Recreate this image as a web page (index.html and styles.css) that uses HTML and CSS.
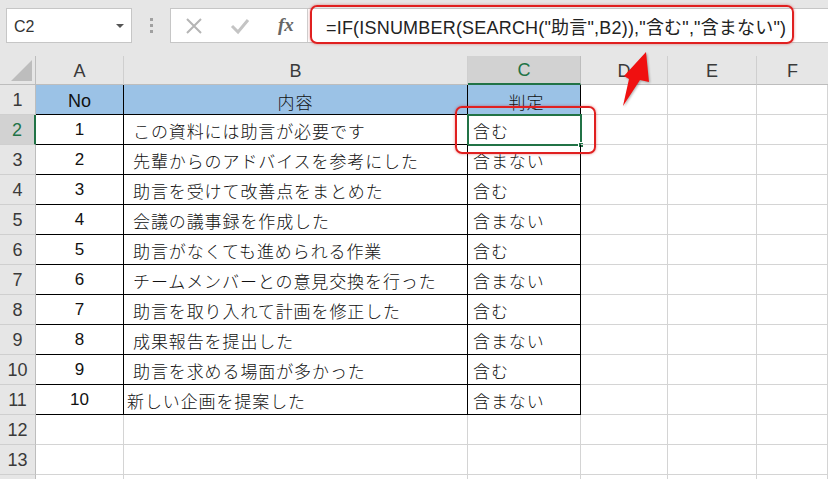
FILE: index.html
```html
<!DOCTYPE html>
<html lang="ja">
<head>
<meta charset="utf-8">
<link rel="stylesheet" href="styles.css">
</head>
<body>
<div class="app">
  <div class="topbar">
    <div class="namebox"><span class="name">C2</span><span class="caret"></span></div>
    <div class="dots"><i></i><i></i><i></i></div>
    <div class="fbar">
      <div class="ficons">
        <svg class="ic" width="20" height="20" viewBox="0 0 20 20"><path d="M3 3 L17 17 M17 3 L3 17" stroke="#b5b5b5" stroke-width="2" fill="none"/></svg>
        <svg class="ic" width="22" height="20" viewBox="0 0 22 20"><path d="M3 10 L9 16 L19 4" stroke="#c4c4c4" stroke-width="3" fill="none"/></svg>
        <span class="fx">fx</span>
      </div>
      <div class="formula">=IF(ISNUMBER(SEARCH("助言",B2)),"含む","含まない")</div>
    </div>
  </div>
  <div class="sheet">
    <div class="corner"><span class="tri"></span></div>
    <div class="ch">A</div><div class="ch">B</div><div class="ch sel">C</div><div class="ch">D</div><div class="ch">E</div><div class="ch last">F</div>

    <div class="rh">1</div><div class="c hd tb">No</div><div class="c hd tb">内容</div><div class="c hd tb">判定</div><div class="c"></div><div class="c"></div><div class="c"></div>
    <div class="rh rsel">2</div><div class="c tb ctr">1</div><div class="c tb">この資料には助言が必要です</div><div class="c tb active">含む<span class="handle"></span></div><div class="c"></div><div class="c"></div><div class="c"></div>
    <div class="rh">3</div><div class="c tb ctr">2</div><div class="c tb">先輩からのアドバイスを参考にした</div><div class="c tb">含まない</div><div class="c"></div><div class="c"></div><div class="c"></div>
    <div class="rh">4</div><div class="c tb ctr">3</div><div class="c tb">助言を受けて改善点をまとめた</div><div class="c tb">含む</div><div class="c"></div><div class="c"></div><div class="c"></div>
    <div class="rh">5</div><div class="c tb ctr">4</div><div class="c tb">会議の議事録を作成した</div><div class="c tb">含まない</div><div class="c"></div><div class="c"></div><div class="c"></div>
    <div class="rh">6</div><div class="c tb ctr">5</div><div class="c tb">助言がなくても進められる作業</div><div class="c tb">含む</div><div class="c"></div><div class="c"></div><div class="c"></div>
    <div class="rh">7</div><div class="c tb ctr">6</div><div class="c tb">チームメンバーとの意見交換を行った</div><div class="c tb">含まない</div><div class="c"></div><div class="c"></div><div class="c"></div>
    <div class="rh">8</div><div class="c tb ctr">7</div><div class="c tb">助言を取り入れて計画を修正した</div><div class="c tb">含む</div><div class="c"></div><div class="c"></div><div class="c"></div>
    <div class="rh">9</div><div class="c tb ctr">8</div><div class="c tb">成果報告を提出した</div><div class="c tb">含まない</div><div class="c"></div><div class="c"></div><div class="c"></div>
    <div class="rh">10</div><div class="c tb ctr">9</div><div class="c tb">助言を求める場面が多かった</div><div class="c tb">含む</div><div class="c"></div><div class="c"></div><div class="c"></div>
    <div class="rh">11</div><div class="c tb ctr">10</div><div class="c tb tight">新しい企画を提案した</div><div class="c tb">含まない</div><div class="c"></div><div class="c"></div><div class="c"></div>
    <div class="rh">12</div><div class="c"></div><div class="c"></div><div class="c"></div><div class="c"></div><div class="c"></div><div class="c"></div>
    <div class="rh">13</div><div class="c"></div><div class="c"></div><div class="c"></div><div class="c"></div><div class="c"></div><div class="c"></div>
    <div class="rh"></div><div class="c"></div><div class="c"></div><div class="c"></div><div class="c"></div><div class="c"></div><div class="c"></div>
  </div>

  <div class="callout formula-callout"></div>
  <div class="callout cell-callout"></div>
  <svg class="arrow" width="60" height="70" viewBox="600 45 60 70">
    <polygon points="646,52 649,82 640,80 623,106 629,79 624,76" fill="#f01010"/>
  </svg>
</div>
</body>
</html>
```
FILE: styles.css
```css
* { box-sizing: border-box; }
html, body { margin: 0; padding: 0; }
body {
  width: 828px; height: 479px; overflow: hidden; background: #fff;
  font-family: "Noto Sans", "Noto Sans CJK JP", sans-serif;
  color: #222;
}
.app { position: relative; width: 828px; height: 479px; overflow: hidden; }

.topbar {
  height: 56px; background: #e6e6e6;
  display: flex; align-items: flex-start;
  padding: 8px 0 0 6px;
}
.namebox {
  width: 126px; height: 35px; background: #fff; border: 1px solid #c6c6c6;
  display: flex; align-items: center; justify-content: space-between;
  padding: 0 7px 0 7px;
}
.name { font-family: "Liberation Sans", sans-serif; font-size: 16px; color: #333; margin-top: 2px; }
.caret { width: 0; height: 0; border-left: 4px solid transparent; border-right: 4px solid transparent; border-top: 4px solid #555; }
.dots {
  width: 38px; height: 35px; display: flex; flex-direction: column;
  align-items: center; justify-content: center; gap: 3px;
}
.dots i { display: block; width: 3px; height: 3px; background: #a0a0a0; }
.fbar {
  flex: 1; height: 35px; background: #fff; border: 1px solid #c6c6c6; border-right: none;
  display: flex; align-items: center;
}
.ficons {
  width: 137px; height: 100%; display: flex; align-items: center;
  padding-left: 13px; gap: 25px; border-right: 1px solid #d0d0d0;
}
.fx { font-family: "Liberation Serif", serif; font-style: italic; font-weight: bold; font-size: 19px; color: #666; margin-left: 2px; margin-top: -2px; }
.formula {
  padding-left: 18px; font-size: 18px; color: #222; letter-spacing: 0.2px;
  font-family: "Liberation Sans", "Noto Sans CJK JP", sans-serif; white-space: nowrap;
}

.sheet {
  display: grid;
  grid-template-columns: 36px 88px 344px 113px 87px 89px 71px;
  grid-template-rows: 29px repeat(14, 30px);
  font-size: 17px;
}
.corner {
  background: #e6e6e6; border-right: 1px solid #bdbdbd; border-bottom: 1px solid #bdbdbd;
  position: relative;
}
.tri {
  position: absolute; right: 3px; bottom: 3px; width: 0; height: 0;
  border-left: 21px solid transparent; border-bottom: 21px solid #bdbdbd;
}
.ch {
  background: #e6e6e6; border-right: 1px solid #cfcfcf; border-bottom: 1px solid #bdbdbd;
  display: flex; align-items: center; justify-content: center;
  font-family: "Liberation Sans", sans-serif; font-size: 18px; color: #3a3a3a;
  padding-top: 2px;
}
.ch.last { border-right: none; }
.ch.sel { background: #d2d2d2; color: #217346; border-bottom: 2px solid #217346; border-right-color: #bdbdbd; }
.rh {
  background: #e6e6e6; border-right: 1px solid #bdbdbd; border-bottom: 1px solid #cfcfcf;
  display: flex; align-items: center; justify-content: center;
  font-family: "Liberation Sans", sans-serif; font-size: 18px; color: #3a3a3a; padding-top: 2px;
}
.rh.rsel { background: #d2d2d2; border-right: 2px solid #217346; color: #217346; }
.c {
  border-right: 1px solid #d4d4d4; border-bottom: 1px solid #d4d4d4;
  display: flex; align-items: center; padding-left: 9px; padding-top: 1px;
  font-family: "Noto Sans CJK JP", sans-serif; font-weight: 300; color: #111;
  white-space: nowrap; position: relative; letter-spacing: 0.9px;
}
.c.tb { border-right: 1px solid #000; border-bottom: 1px solid #000; }
.c.ctr { justify-content: center; padding-left: 0; font-family: "Liberation Sans", sans-serif; font-weight: normal; font-size: 17px; letter-spacing: 0; }
.c.hd { background: #9bc2e6; justify-content: center; padding-left: 0; padding-top: 3px; }
.sheet > .c.hd:nth-child(9) { font-family: "Liberation Sans", sans-serif; font-weight: normal; font-size: 18px; letter-spacing: 0; }
.c.tight { padding-left: 3px; }
.c.active { outline: 2px solid #217346; outline-offset: -1px; padding-left: 5px; }
.c.active .handle {
  position: absolute; right: -4px; bottom: -4px; width: 6px; height: 6px;
  background: #217346; border: 1px solid #fff;
}
.sheet > .c:nth-child(7n+4) { padding-left: 5px; }

.callout {
  position: absolute; border: 2px solid #e02020; border-radius: 7px;
  box-shadow: 0 0 3px rgba(200,0,0,0.45);
}
.formula-callout { left: 310px; top: 5px; width: 484px; height: 39px; }
.cell-callout { left: 455px; top: 106px; width: 141px; height: 48px; }
.arrow { position: absolute; left: 600px; top: 45px; filter: drop-shadow(1px 1px 1px rgba(0,0,0,0.3)); }
```
